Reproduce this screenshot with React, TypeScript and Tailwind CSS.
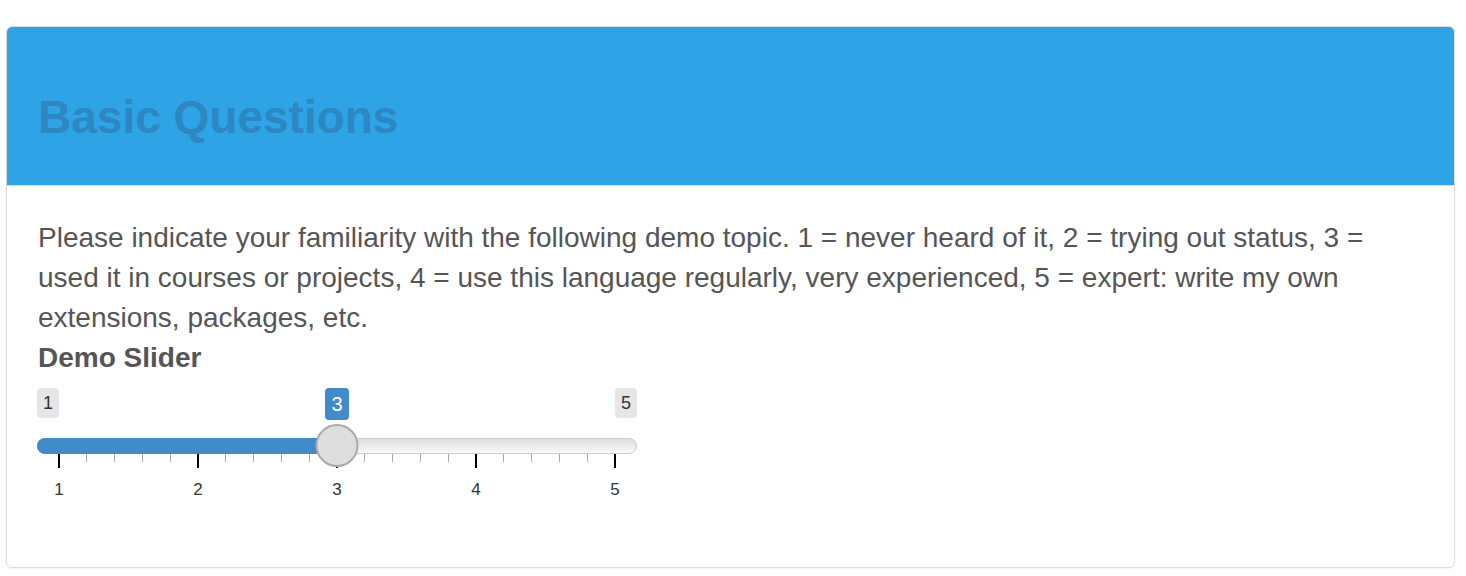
import React from "react";

const ticks = [1, 2, 3, 4, 5];
const minorTicks = Array.from({ length: 21 }, (_, i) => i);

function Slider({ value }: { value: number }) {
  const pct = ((value - 1) / 4) * 556 + 22;
  return (
    <div className="-ml-px w-[600px] pt-[10px]">
      <div className="relative flex justify-between">
        <span className="h-[30px] px-[6px] rounded-[4px] bg-[#e6e6e6] text-[#333] text-[18px] leading-[30px]">
          1
        </span>
        <span
          className="absolute top-0 h-[32px] w-[24px] -translate-x-1/2 text-center rounded-[4px] bg-[#428bca] text-white text-[20px] leading-[32px]"
          style={{ left: pct }}
        >
          {value}
        </span>
        <span className="h-[30px] px-[6px] rounded-[4px] bg-[#e6e6e6] text-[#333] text-[18px] leading-[30px]">
          5
        </span>
      </div>
      <div className="relative mt-[20px] h-[16px]">
        <div className="h-full rounded-full border border-[#cccccc] bg-gradient-to-b from-[#dddddd] to-[#fafafa]" />
        <div
          className="absolute left-0 top-0 h-full rounded-l-full bg-[#428bca]"
          style={{ width: pct }}
        />
        <div
          className="absolute top-[-14px] h-[43px] w-[43px] -translate-x-1/2 rounded-full border-2 border-[#aaaaaa] bg-[#dedede]"
          style={{ left: pct }}
        />
      </div>
      <div className="flex justify-between px-[22px]">
        {minorTicks.map((i) => (
          <div key={i} className="flex w-0 justify-center">
            {i % 5 === 0 ? (
              <div className="h-[14px] w-[2px] shrink-0 bg-black" />
            ) : (
              <div className="h-[8px] w-px shrink-0 bg-[#aaaaaa]" />
            )}
          </div>
        ))}
      </div>
      <div className="flex justify-between px-[22px] pt-[11px]">
        {ticks.map((t) => (
          <div key={t} className="flex w-0 justify-center">
            <span className="text-[17px] leading-[22px] text-[#333]">{t}</span>
          </div>
        ))}
      </div>
    </div>
  );
}

export default function App() {
  return (
    <div className="bg-white pt-[26px] pl-[6px] pr-[11px] pb-[8px] font-['Liberation_Sans',Arial,sans-serif]">
      <div className="h-[542px] rounded-[6px] border border-[#dddddd] overflow-hidden shadow-[0_1px_2px_rgba(0,0,0,0.05)]">
        <div className="h-[159px] bg-[#2ea3e6] border-b border-[#dddddd] pl-[31px] pt-[65px]">
          <h3 className="text-[46px] leading-[51px] font-bold text-[#2d87c0]">
            Basic Questions
          </h3>
        </div>
        <div className="px-[31px] pt-[32px]">
          <p className="text-[28px] leading-[40px] text-[#555555]">
            Please indicate your familiarity with the following demo topic. 1 = never heard of it, 2 =
            trying out status, 3 = used it in courses or projects, 4 = use this language regularly, very
            experienced, 5 = expert: write my own extensions, packages, etc.
          </p>
          <label className="block text-[28px] leading-[40px] font-bold text-[#555555]">
            Demo Slider
          </label>
          <Slider value={3} />
        </div>
      </div>
    </div>
  );
}
